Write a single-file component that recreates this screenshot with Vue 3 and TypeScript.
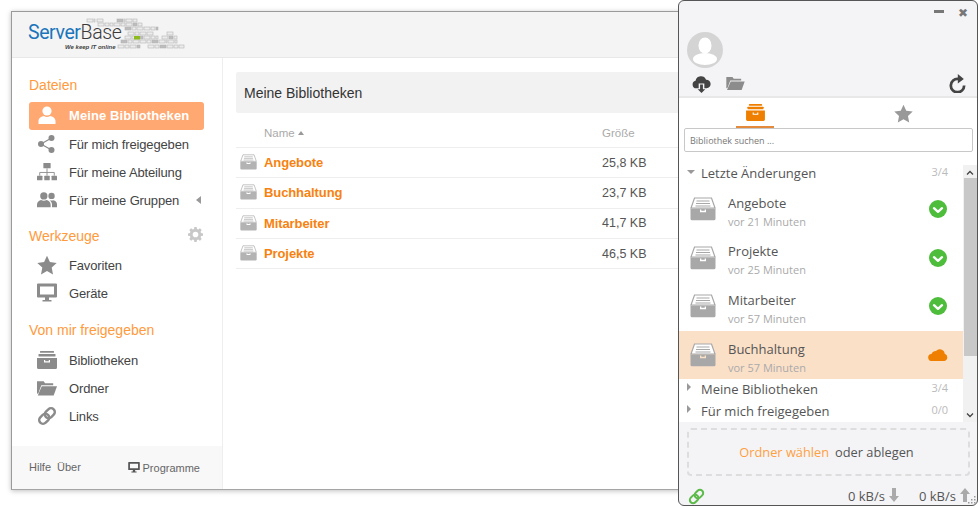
<script setup lang="ts">
const fileItems = [
  { icon: 'i-user', label: 'Meine Bibliotheken', active: true },
  { icon: 'i-share', label: 'Für mich freigegeben' },
  { icon: 'i-tree', label: 'Für meine Abteilung' },
  { icon: 'i-users', label: 'Für meine Gruppen', caret: true },
]
const toolItems = [
  { icon: 'i-star', label: 'Favoriten' },
  { icon: 'i-monitor', label: 'Geräte' },
]
const sharedItems = [
  { icon: 'i-archive', label: 'Bibliotheken' },
  { icon: 'i-folder', label: 'Ordner' },
  { icon: 'i-link', label: 'Links' },
]
const rows = [
  { name: 'Angebote', size: '25,8 KB' },
  { name: 'Buchhaltung', size: '23,7 KB' },
  { name: 'Mitarbeiter', size: '41,7 KB' },
  { name: 'Projekte', size: '46,5 KB' },
]
const recent = [
  { name: 'Angebote', time: 'vor 21 Minuten', state: 'ok' },
  { name: 'Projekte', time: 'vor 25 Minuten', state: 'ok' },
  { name: 'Mitarbeiter', time: 'vor 57 Minuten', state: 'ok' },
  { name: 'Buchhaltung', time: 'vor 57 Minuten', state: 'sync' },
]

const bitRows: [number, number, number][] = [
  [7, 59, 67], [7, 69, 75], [7, 89, 97], [7, 98, 110],
  [11, 70, 85], [11, 86, 97], [11, 98, 114],
  [15, 97, 130],
  [20, 100, 125], [20, 139, 145],
  [24, 97, 130], [24, 134, 149],
  [28, 93, 139], [28, 140, 149],
  [33, 90, 112], [33, 120, 156],
]
const bits: { x: number; y: number; w: number; dark: boolean }[] = []
bitRows.forEach(([y, from, to], r) => {
  let x = from
  let n = 0
  while (x < to) {
    const w = Math.min(n % 3 === 1 ? 4 : 6, to - x)
    bits.push({ x, y, w, dark: (r + n) % 5 === 2 })
    x += w + 1
    n++
  }
})
const grip = [[6, 0], [3, 3], [6, 3], [0, 6], [3, 6], [6, 6]]
</script>

<template>
  <div class="desk">
    <svg class="defs" aria-hidden="true">
      <symbol id="i-user" viewBox="0 0 20 20"><circle cx="10" cy="6" r="4.6" /><path d="M1.5 19v-3c0-3 3-4.5 5.5-5 1.8 1.2 4.2 1.2 6 0 2.5.5 5.5 2 5.5 5v3z" /></symbol>
      <symbol id="i-share" viewBox="0 0 20 20"><circle cx="4" cy="10" r="3" /><circle cx="14.5" cy="4" r="3" /><circle cx="14.5" cy="16" r="3" /><path d="M4 10l10.500-6M4 10l10.500 6" stroke="currentColor" stroke-width="1.200" fill="none" /></symbol>
      <symbol id="i-tree" viewBox="0 0 22 20"><rect x="7" y="0" width="8" height="6" rx=".6" /><rect x="0" y="14" width="6" height="5" rx=".6" /><rect x="8" y="14" width="6" height="5" rx=".6" /><rect x="16" y="14" width="6" height="5" rx=".6" /><path d="M11 6v8M3 14v-3.500h16V14" stroke="currentColor" stroke-width="1" fill="none" /></symbol>
      <symbol id="i-users" viewBox="0 0 22 18"><circle cx="7.5" cy="4.5" r="4" /><circle cx="16" cy="4.5" r="3.5" /><path d="M0 17v-3c0-3 2.500-4.500 4.500-5 1.800 1 4.200 1 6 0 2 .5 4.500 2 4.500 5v3z" /><path d="M16.500 17v-3c0-2-1-3.500-2.500-4.800 1.400.5 2.600.5 4 0 2 .5 4 2 4 4.300V17z" /></symbol>
      <symbol id="i-star" viewBox="0 0 20 20"><path d="M10 .8l2.900 6.300 6.800.8-5 4.700 1.300 6.800-6-3.400-6 3.400 1.300-6.800-5-4.700 6.800-.8z" /></symbol>
      <symbol id="i-monitor" viewBox="0 0 20 19"><path fill-rule="evenodd" d="M1 0h18a1 1 0 0 1 1 1v12a1 1 0 0 1-1 1H12v2.500h2.500V18h-9v-1.500H8V14H1a1 1 0 0 1-1-1V1a1 1 0 0 1 1-1zm2 3v8h14V3z" /></symbol>
      <symbol id="i-archive" viewBox="0 0 20 18"><rect x="3" y="0" width="14" height="1.800" rx=".5" /><rect x="1.5" y="3" width="17" height="2.500" rx=".5" /><path fill-rule="evenodd" d="M0 7h20v9.500a1.500 1.500 0 0 1-1.500 1.500h-17A1.500 1.500 0 0 1 0 16.500zm7 2v2.500h6V9h-1.200v1.200H8.200V9z" /></symbol>
      <symbol id="i-folder" viewBox="0 0 21 16"><path d="M0 1h7l1.500 2H17v2H4.500L1.500 13.500 0 14z" /><path d="M5 6.200h16L17.500 16H.8z" /></symbol>
      <symbol id="i-link" viewBox="0 0 20 20"><g fill="none" stroke="currentColor" stroke-width="2.400" transform="rotate(-45 10 10)"><rect x="0.500" y="6.200" width="11" height="7.600" rx="3.800" /><rect x="8.500" y="6.200" width="11" height="7.600" rx="3.800" /></g></symbol>
      <symbol id="i-gear" viewBox="0 0 16 16"><path fill-rule="evenodd" d="M6.800 0h2.400l.4 2.100 1.300.5L12.700 1.400l1.900 1.900-1.200 1.800.5 1.300 2.100.4v2.400l-2.100.4-.5 1.300 1.200 1.800-1.900 1.900-1.800-1.200-1.300.5-.4 2.100H6.800l-.4-2.100-1.300-.5-1.800 1.200-1.900-1.900 1.200-1.800-.5-1.300L0 9.200V6.800l2.100-.4.500-1.300L1.400 3.300l1.900-1.900 1.800 1.200 1.300-.5zM8 5a3 3 0 1 0 0 6 3 3 0 0 0 0-6z" /></symbol>
      <symbol id="i-drawer" viewBox="0 0 26 24"><path d="M4.500 1h17L25 11H1z" fill="#fff" stroke="currentColor" stroke-width="1.200" /><path d="M6.500 4h13M6 6.500h14M5.500 9h15" stroke="currentColor" stroke-width="1.100" fill="none" /><path fill-rule="evenodd" d="M.5 11.500h25v10.300a1.500 1.500 0 0 1-1.500 1.500H2a1.500 1.500 0 0 1-1.500-1.500zm9.500 1v2.700h6v-2.700h-1.300v1.200h-3.400v-1.200z" /></symbol>
      <symbol id="i-cloud-down" viewBox="0 0 20 18"><path d="M4.500 13A4 4 0 0 1 3.700 5.100 5.800 5.800 0 0 1 14.800 4 4.500 4.500 0 0 1 15.500 13H13V8H7v5z" /><path d="M8.500 9h3v5H14l-4 4-4-4h2.500z" /></symbol>
      <symbol id="i-refresh" viewBox="0 0 18 18"><path d="M9.500 4.700A6.300 6.300 0 1 0 15.300 11" fill="none" stroke="currentColor" stroke-width="2.600" /><path d="M9.300 0l5.700 4.700-5.700 4.300z" /></symbol>
      <symbol id="i-check" viewBox="0 0 18 18"><circle cx="9" cy="9" r="9" fill="#4ebd3c" /><path d="M5 8.200l4 3.600 4-3.600" fill="none" stroke="#fff" stroke-width="2.400" stroke-linecap="round" stroke-linejoin="round" /></symbol>
      <symbol id="i-cloud" viewBox="0 0 20 13"><path d="M4 13a3.500 3.500 0 0 1-.6-7A5 5 0 0 1 8 3a5 5 0 0 1 8.700 2.800A3.700 3.700 0 0 1 16 13z" /></symbol>
      <symbol id="i-arrow" viewBox="0 0 10 14"><path d="M3 0h4v8h3L5 14 0 8h3z" /></symbol>
    </svg>

    <div class="window">
      <header class="brand">
        <div class="logo">
          <svg class="bits" viewBox="0 0 165 42" aria-hidden="true">
            <rect
              v-for="(b, i) in bits"
              :key="i"
              :x="b.x"
              :y="b.y"
              :width="b.w"
              height="3"
              :fill="b.dark ? '#bdbdbd' : '#ececec'"
              stroke="#b5b5b5"
              stroke-width=".6"
            />
            <rect x="106" y="24" width="6" height="3.500" fill="#8dbb1e" />
          </svg>
          <div class="wordmark"><span class="w-blue">Server</span><span class="w-dark">Base</span></div>
          <div class="tagline">We keep IT online</div>
        </div>
      </header>
      <div class="split">
        <aside class="side">
          <div class="side-body">
            <h3 class="side-title first">Dateien</h3>
            <a v-for="it in fileItems" :key="it.label" class="nav" :class="{ active: it.active }">
              <span class="nav-ic"><svg class="ic"><use :href="'#' + it.icon" /></svg></span>
              <span class="nav-txt">{{ it.label }}</span>
              <span v-if="it.caret" class="caret-left"></span>
            </a>
            <div class="title-row">
              <h3 class="side-title">Werkzeuge</h3>
              <svg class="gear"><use href="#i-gear" /></svg>
            </div>
            <a v-for="it in toolItems" :key="it.label" class="nav">
              <span class="nav-ic"><svg class="ic"><use :href="'#' + it.icon" /></svg></span>
              <span class="nav-txt">{{ it.label }}</span>
            </a>
            <h3 class="side-title third">Von mir freigegeben</h3>
            <a v-for="it in sharedItems" :key="it.label" class="nav">
              <span class="nav-ic"><svg class="ic"><use :href="'#' + it.icon" /></svg></span>
              <span class="nav-txt">{{ it.label }}</span>
            </a>
          </div>
          <footer class="side-foot">
            <span class="foot-links"><span>Hilfe</span><span>Über</span></span>
            <span class="foot-prog"><svg class="foot-ic"><use href="#i-monitor" /></svg>Programme</span>
          </footer>
        </aside>
        <main class="content">
          <div class="heading">Meine Bibliotheken</div>
          <div class="thead">
            <span class="col-name">Name<i class="caret-up"></i></span>
            <span class="col-size">Größe</span>
          </div>
          <div v-for="r in rows" :key="r.name" class="trow">
            <svg class="row-ic"><use href="#i-drawer" /></svg>
            <span class="col-name link">{{ r.name }}</span>
            <span class="col-size">{{ r.size }}</span>
          </div>
        </main>
      </div>
    </div>

    <div class="client">
      <div class="top">
        <div class="winctl">
          <span class="min"></span>
          <span class="close">✖</span>
        </div>
        <div class="avatar">
          <svg viewBox="0 0 36 36"><circle cx="18" cy="18" r="18" fill="#d4d4d4" /><ellipse cx="18" cy="13.5" rx="6.5" ry="8" fill="#fff" /><ellipse cx="18" cy="27" rx="12" ry="6" fill="#fff" /></svg>
        </div>
        <div class="actions">
          <svg class="cloud-down"><use href="#i-cloud-down" /></svg>
          <svg class="open"><use href="#i-folder" /></svg>
          <svg class="refresh"><use href="#i-refresh" /></svg>
        </div>
      </div>
      <div class="tabs">
        <div class="tab on"><svg><use href="#i-archive" /></svg></div>
        <div class="tab"><svg><use href="#i-star" /></svg></div>
      </div>
      <div class="search-band"><div class="search">Bibliothek suchen ...</div></div>
      <div class="listwrap">
        <div class="list">
          <div class="sec">
            <i class="tri-down"></i><span class="sec-name">Letzte Änderungen</span><span class="sec-count">3/4</span>
          </div>
          <div v-for="r in recent" :key="r.name" class="item" :class="{ syncing: r.state === 'sync' }">
            <svg class="item-ic"><use href="#i-drawer" /></svg>
            <div class="item-txt">
              <div class="item-name">{{ r.name }}</div>
              <div class="item-time">{{ r.time }}</div>
            </div>
            <svg v-if="r.state === 'ok'" class="state"><use href="#i-check" /></svg>
            <svg v-else class="state-cloud"><use href="#i-cloud" /></svg>
          </div>
          <div class="sec">
            <i class="tri-right"></i><span class="sec-name">Meine Bibliotheken</span><span class="sec-count">3/4</span>
          </div>
          <div class="sec">
            <i class="tri-right"></i><span class="sec-name">Für mich freigegeben</span><span class="sec-count">0/0</span>
          </div>
        </div>
        <div class="scroll">
          <svg class="chev" viewBox="0 0 8 6"><path d="M1 4.500l3-3 3 3" fill="none" stroke="#444" stroke-width="1.300" /></svg>
          <div class="track"><div class="thumb"></div></div>
          <svg class="chev" viewBox="0 0 8 6"><path d="M1 1.500l3 3 3-3" fill="none" stroke="#444" stroke-width="1.300" /></svg>
        </div>
      </div>
      <div class="bottom">
        <div class="drop"><span class="pick">Ordner wählen</span><span class="or">oder ablegen</span></div>
        <div class="status">
          <svg class="status-link"><use href="#i-link" /></svg>
          <span class="rate">0 kB/s</span>
          <svg class="rate-ic"><use href="#i-arrow" /></svg>
          <span class="rate">0 kB/s</span>
          <svg class="rate-ic up"><use href="#i-arrow" /></svg>
        </div>
        <svg class="grip" viewBox="0 0 8 8" aria-hidden="true">
          <rect v-for="(g, i) in grip" :key="i" :x="g[0]" :y="g[1]" width="1.500" height="1.500" fill="#999" />
        </svg>
      </div>
    </div>
  </div>
</template>

<style scoped>
.desk {
  position: relative;
  width: 979px;
  height: 508px;
  overflow: hidden;
  background: #fff;
  font-family: "Liberation Sans", Arial, sans-serif;
}
.defs { position: absolute; width: 0; height: 0; }

.window {
  position: absolute;
  left: 11px;
  top: 11px;
  width: 680px;
  height: 479px;
  box-sizing: border-box;
  display: flex;
  flex-direction: column;
  background: #fff;
  border-top: 1px solid #9a9a9a;
  border-left: 1px solid #9a9a9a;
  border-bottom: 1px solid #a5a5a5;
  box-shadow: 0 1px 5px rgba(0, 0, 0, .25);
}
.brand {
  height: 45px;
  flex: none;
  background: #f4f4f5;
  border-bottom: 1px solid #e8e8e8;
  padding-left: 16px;
}
.logo { position: relative; width: 165px; height: 45px; }
.bits { position: absolute; left: 0; top: 0; width: 165px; height: 42px; }
.wordmark {
  position: absolute;
  left: 0;
  top: 11px;
  font-family: Roboto, sans-serif;
  font-weight: 300;
  font-size: 19.5px;
  letter-spacing: -.4px;
  line-height: 20px;
}
.w-blue { color: #1b75bb; font-weight: 400; }
.w-dark { color: #3a3a3a; }
.tagline {
  position: absolute;
  left: 37px;
  top: 31px;
  font-size: 6px;
  line-height: 8px;
  font-weight: 700;
  font-style: italic;
  white-space: nowrap;
  color: #444;
}
.split { flex: 1; display: flex; min-height: 0; }
.side {
  width: 211px;
  flex: none;
  display: flex;
  flex-direction: column;
  border-right: 1px solid #eee;
  box-sizing: border-box;
}
.side-body { flex: 1; padding: 0 18px 0 17px; }
.side-title {
  margin: 0;
  font-size: 14px;
  line-height: 18px;
  font-weight: 400;
  color: #ff9a3d;
}
.side-title.first { margin-top: 18px; margin-bottom: 8px; }
.side-title.third { margin-top: 14px; margin-bottom: 7px; }
.title-row {
  display: flex;
  align-items: center;
  justify-content: space-between;
  margin-top: 13px;
  margin-bottom: 6px;
}
.gear { width: 15px; height: 15px; fill: #c8c8c8; margin: -4px 1px 0 0; }
.nav {
  display: flex;
  align-items: center;
  height: 28px;
  border-radius: 3px;
  font-size: 13px;
  letter-spacing: -.15px;
  color: #444;
}
.nav.active {
  background: #ffa872;
  color: #fff;
  font-weight: 700;
  letter-spacing: .1px;
  box-sizing: border-box;
  padding-bottom: 2px;
}
.nav-ic {
  width: 40px;
  flex: none;
  display: flex;
  justify-content: center;
  padding-right: 4px;
  box-sizing: border-box;
}
.ic { width: 20px; height: 20px; fill: #8b8b8b; color: #8b8b8b; }
.nav.active .ic { fill: #fff; color: #fff; }
.nav-txt { flex: 1; white-space: nowrap; }
.caret-left {
  width: 0;
  height: 0;
  border: 4px solid transparent;
  border-left: 0;
  border-right: 5px solid #999;
  margin-right: 3px;
}
.side-foot {
  height: 43px;
  flex: none;
  background: #f8f8f8;
  display: flex;
  align-items: center;
  justify-content: space-between;
  padding: 0 22px 2px 17px;
  box-sizing: border-box;
  font-size: 11px;
  color: #666;
}
.foot-links { display: flex; gap: 6px; }
.foot-prog { display: flex; align-items: center; gap: 3px; margin-top: 2px; }
.foot-ic { width: 12px; height: 11px; fill: #555; }
.content { flex: 1; padding: 14px 0 0 13px; min-width: 0; }
.heading {
  height: 41px;
  background: #f2f2f2;
  border-radius: 2px;
  display: flex;
  align-items: center;
  padding-left: 8px;
  font-size: 14px;
  color: #333;
}
.thead, .trow {
  display: flex;
  align-items: center;
  border-bottom: 1px solid #eee;
  position: relative;
}
.thead { height: 35px; font-size: 11.5px; color: #aaa; padding-top: 5px; box-sizing: border-box; }
.trow { height: 30.3px; box-sizing: border-box; font-size: 12.5px; color: #555; }
.row-ic { position: absolute; left: 4px; top: 6px; width: 17px; height: 16px; fill: #b3b3b3; color: #b3b3b3; }
.col-name { width: 338px; margin-left: 28px; flex: none; }
.link { color: #f7820f; font-weight: 700; font-size: 13px; letter-spacing: -.1px; }
.caret-up {
  display: inline-block;
  width: 0;
  height: 0;
  border: 3.5px solid transparent;
  border-top: 0;
  border-bottom: 4px solid #999;
  margin-left: 3px;
  vertical-align: 2px;
}

.client {
  position: absolute;
  left: 678px;
  top: 0;
  width: 300px;
  height: 506px;
  box-sizing: border-box;
  display: flex;
  flex-direction: column;
  background: #f4f4f7;
  border: 1px solid #555;
  border-radius: 6px;
  overflow: hidden;
  font-family: "Open Sans", sans-serif;
  color: #555;
}
.top {
  position: relative;
  height: 97px;
  flex: none;
  box-sizing: border-box;
  border-bottom: 2px solid #e8e8e8;
}
.winctl { position: absolute; right: 9px; top: 4px; display: flex; align-items: center; gap: 14px; height: 16px; }
.min { width: 10px; height: 3px; background: #777; margin-top: -3px; }
.close { font-size: 12px; line-height: 14px; color: #777; font-family: "DejaVu Sans", sans-serif; }
.avatar { position: absolute; left: 8px; top: 31px; width: 36px; height: 36px; }
.avatar svg { width: 36px; height: 36px; display: block; }
.actions {
  position: absolute;
  left: 13px;
  right: 10px;
  top: 73px;
  height: 20px;
  display: flex;
  align-items: center;
}
.cloud-down { width: 19px; height: 17px; fill: #444; }
.open { width: 19px; height: 14px; fill: #8c8c8c; margin-left: 15px; margin-top: -2px; }
.refresh { width: 19px; height: 19px; fill: #444; color: #444; margin-left: auto; margin-top: -1px; }
.tabs {
  display: flex;
  height: 30px;
  flex: none;
  background: #fff;
}
.tab {
  display: flex;
  justify-content: center;
  box-sizing: border-box;
  padding-top: 6px;
  height: 30px;
}
.tab svg { width: 19px; height: 19px; fill: #999; }
.tab:first-child { margin-left: 57px; width: 38px; border-bottom: 2px solid #e38a3c; }
.tab.on svg { fill: #ee7f00; width: 19px; height: 17px; }
.tab:last-child { margin-left: 104px; width: 50px; }
.search-band { background: #fff; padding: 0 4px 0 5px; flex: none; }
.search {
  height: 24px;
  box-sizing: border-box;
  display: flex;
  align-items: center;
  padding: 0 5px;
  background: #fff;
  border: 1px solid #c8c8c8;
  border-radius: 2px;
  font-size: 9px;
  color: #777;
}
.listwrap {
  flex: 1;
  min-height: 0;
  display: flex;
  background: #fff;
  padding-top: 10px;
}
.list { flex: 1; min-width: 0; padding-top: 1px; }
.sec {
  display: flex;
  align-items: center;
  height: 22px;
  box-sizing: border-box;
  padding: 0 15px 3px 8px;
  font-size: 13px;
  color: #555;
}
.sec-name { margin-left: 7px; flex: 1; }
.sec-count { font-size: 11px; color: #bbb; margin-top: -2px; }
.tri-down { width: 0; height: 0; border: 4px solid transparent; border-top: 4.5px solid #999; border-bottom: 0; margin-top: -2px; margin-right: -1px; }
.tri-right { width: 0; height: 0; border: 4px solid transparent; border-left: 4.5px solid #999; border-right: 0; margin-right: 3px; margin-top: -3px; }
.item {
  display: flex;
  align-items: center;
  height: 48.6px;
  box-sizing: border-box;
}
.syncing { background: #fbe0c8; }
.item-ic { width: 26px; height: 24px; margin-left: 11px; flex: none; fill: #a8a8a8; color: #a8a8a8; }
.item-txt { margin-left: 12px; flex: 1; margin-top: 4px; }
.item-name { font-size: 13px; line-height: 18px; color: #555; }
.item-time { font-size: 11px; line-height: 15px; color: #aaa; margin-top: 2px; }
.state { width: 18px; height: 18px; margin-right: 16px; flex: none; }
.state-cloud { width: 20px; height: 13px; fill: #ee7f00; margin-right: 15px; flex: none; margin-top: -1px; }
.scroll {
  width: 14px;
  flex: none;
  display: flex;
  flex-direction: column;
  background: #f1f1f1;
  margin-top: 3px;
}
.chev { width: 8px; height: 6px; margin: 5px 3px; flex: none; }
.chev:last-child { margin: 6px 3px 4px; }
.track { flex: 1; min-height: 0; }
.thumb { height: 178px; margin: -3px 0 0 1px; background: #c8c8c8; }
.bottom { position: relative; height: 83px; flex: none; box-sizing: border-box; padding: 6px 7px 0 8px; }
.drop {
  height: 48px;
  box-sizing: border-box;
  border: 2px dashed #ddd;
  border-radius: 4px;
  display: flex;
  align-items: center;
  justify-content: center;
  gap: 6px;
  padding-right: 4px;
  font-size: 12.8px;
}
.pick { color: #ffa040; }
.or { color: #555; }
.status { display: flex; align-items: center; height: 22px; margin-top: 9px; font-size: 13px; color: #555; }
.status-link { width: 17px; height: 17px; fill: none; color: #5dbb4a; margin-right: auto; margin-left: 1px; }
.rate-ic { width: 10px; height: 14px; fill: #aaa; margin-left: 4px; margin-top: -2px; }
.rate-ic.up { transform: rotate(180deg); }
.rate-ic + .rate { margin-left: 20px; }
.grip { position: absolute; right: 1px; bottom: 1px; width: 8px; height: 8px; }
</style>
